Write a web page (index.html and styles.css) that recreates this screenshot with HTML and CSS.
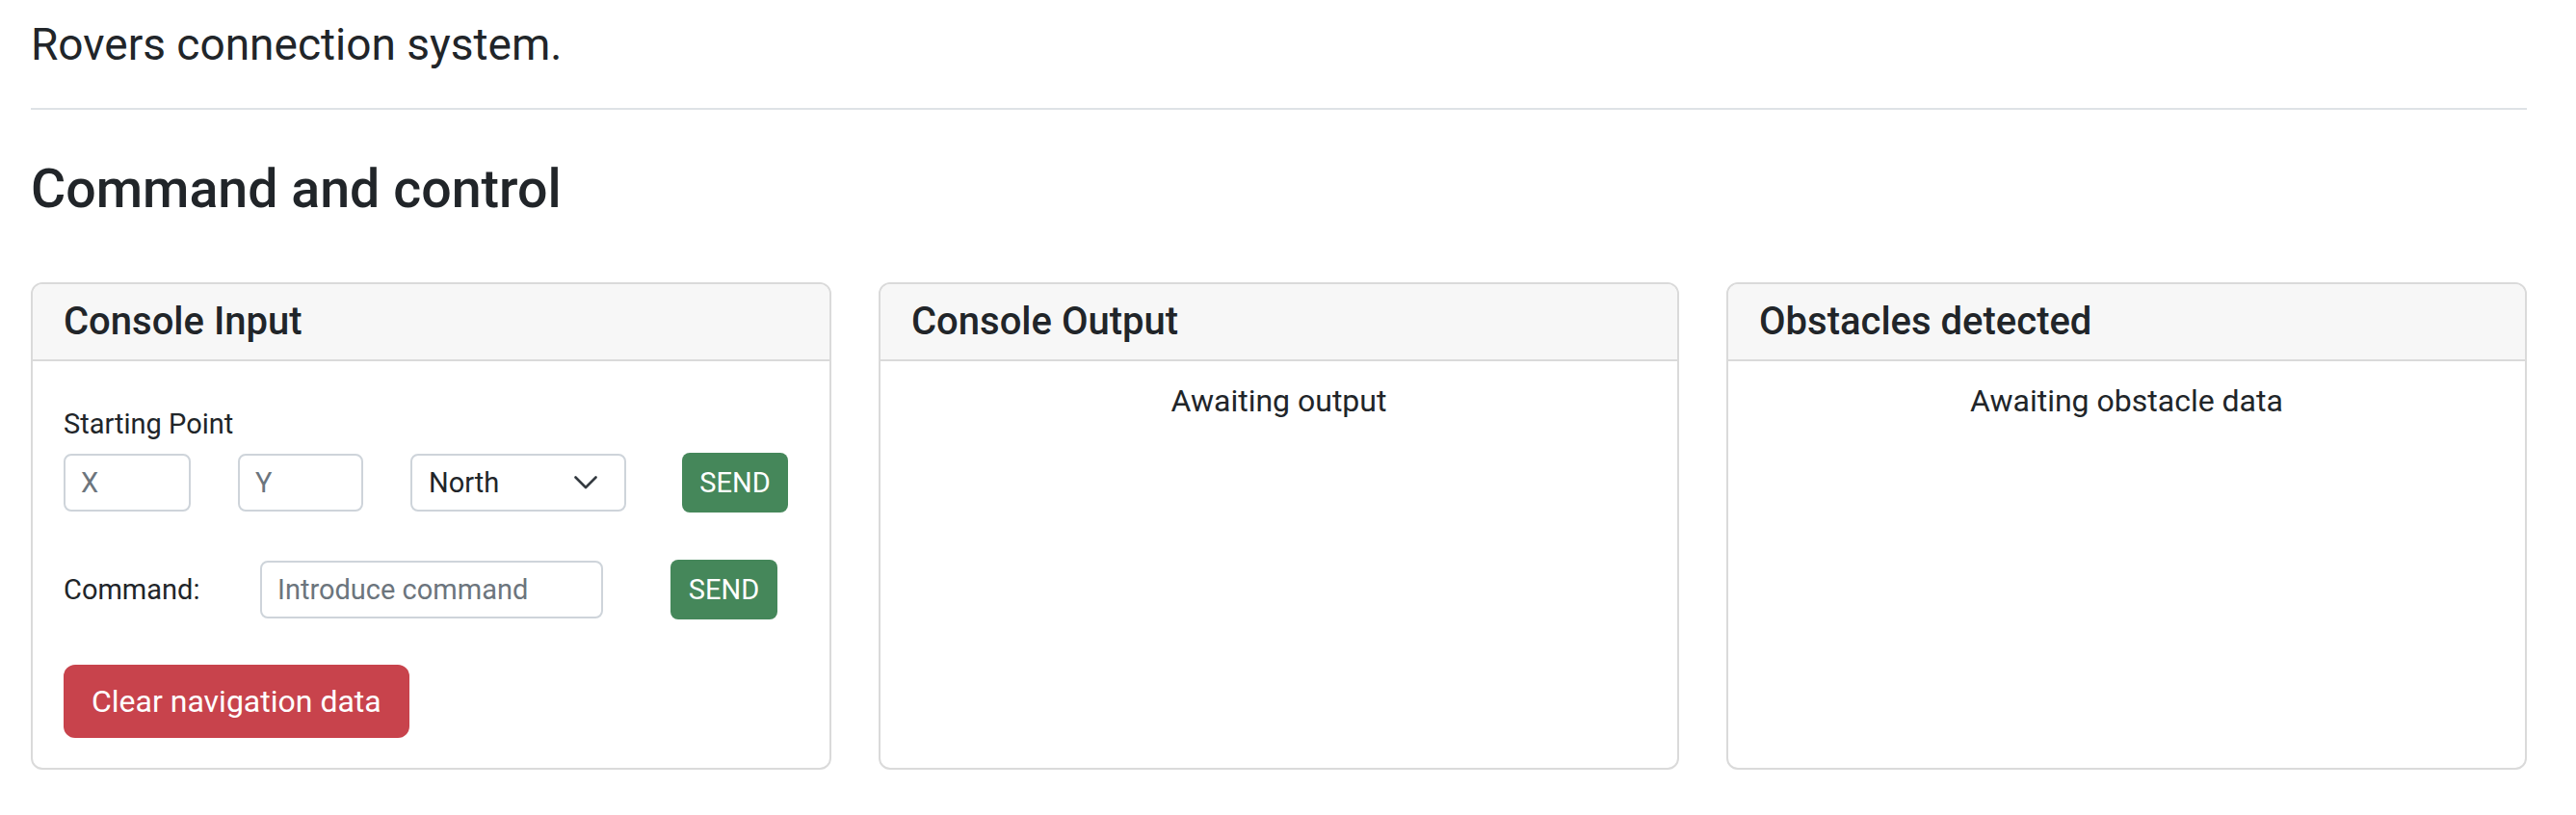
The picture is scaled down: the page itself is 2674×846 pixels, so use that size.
FILE: index.html
```html
<!DOCTYPE html>
<html lang="en">
<head>
<meta charset="utf-8">
<title>Rovers connection system</title>
<link rel="stylesheet" href="styles.css">
</head>
<body>
<div class="page">
  <p class="lead">Rovers connection system.</p>
  <hr class="divider">
  <h2 class="title">Command and control</h2>
  <div class="cards">
    <section class="card">
      <header class="card-header"><h5 class="card-title">Console Input</h5></header>
      <div class="card-body input-body">
        <label class="form-label">Starting Point</label>
        <div class="start-row">
          <input class="field field-x" type="text" placeholder="X">
          <input class="field field-y" type="text" placeholder="Y">
          <div class="select">
            <span>North</span>
            <svg class="chevron" viewBox="0 0 24 14" width="24" height="14" aria-hidden="true"><path d="M1.5 1.5L12 12L22.5 1.5" fill="none" stroke="#343a40" stroke-width="2.6" stroke-linecap="round" stroke-linejoin="round"/></svg>
          </div>
          <button class="btn-send" type="button">SEND</button>
        </div>
        <div class="command-row">
          <label class="cmd-label">Command:</label>
          <input class="field field-cmd" type="text" placeholder="Introduce command">
          <button class="btn-send" type="button">SEND</button>
        </div>
        <button class="btn-clear" type="button">Clear navigation data</button>
      </div>
    </section>
    <section class="card">
      <header class="card-header"><h5 class="card-title">Console Output</h5></header>
      <div class="card-body text-body">
        <p class="awaiting">Awaiting output</p>
      </div>
    </section>
    <section class="card">
      <header class="card-header"><h5 class="card-title">Obstacles detected</h5></header>
      <div class="card-body text-body">
        <p class="awaiting">Awaiting obstacle data</p>
      </div>
    </section>
  </div>
</div>
</body>
</html>
```

FILE: styles.css
```css
* { box-sizing: border-box; }

html, body {
  margin: 0;
  padding: 0;
  background: #ffffff;
}

body {
  font-family: Roboto, "Liberation Sans", Arial, sans-serif;
  color: #212529;
}

.page {
  padding: 0 51px 0 32px;
  display: flex;
  flex-direction: column;
}

.lead {
  margin: 0;
  padding-top: 18px;
  font-size: 46px;
  line-height: 56px;
  font-weight: 400;
}

.divider {
  margin: 38px 0 0 0;
  border: 0;
  height: 2px;
  background: #dee2e6;
}

.title {
  margin: 49px 0 0 0;
  font-size: 55.5px;
  line-height: 67px;
  font-weight: 500;
}

.cards {
  margin-top: 63px;
  display: grid;
  grid-template-columns: repeat(3, 1fr);
  column-gap: 49px;
}

.card {
  border: 2px solid #dadada;
  border-radius: 12px;
  background: #fff;
  display: flex;
  flex-direction: column;
  overflow: hidden;
}

.card-header {
  background: #f7f7f7;
  border-bottom: 2px solid #dadada;
  padding: 15px 32px;
}

.card-title {
  margin: 0;
  font-size: 40px;
  line-height: 48px;
  font-weight: 500;
}

.card-body {
  flex: 1;
  padding: 44px 32px 31px 32px;
  display: flex;
  flex-direction: column;
  align-items: flex-start;
}

.text-body {
  padding-top: 17px;
  align-items: stretch;
}

.awaiting {
  margin: 0;
  text-align: center;
  font-size: 32px;
  line-height: 48px;
}

.form-label {
  font-size: 29px;
  line-height: 42px;
  margin-bottom: 9px;
}

.start-row {
  display: flex;
  align-items: center;
  height: 62px;
}

.field {
  font-family: Roboto, "Liberation Sans", Arial, sans-serif;
  font-size: 29px;
  height: 60px;
  padding: 0 16px;
  border: 2px solid #ced4da;
  border-radius: 8px;
  color: #212529;
  background: #fff;
  outline: none;
}

.field::placeholder {
  color: #6c757d;
  opacity: 1;
}

.field-x { width: 132px; }
.field-y { width: 130px; margin-left: 49px; }

.select {
  width: 224px;
  height: 60px;
  margin-left: 49px;
  border: 2px solid #ced4da;
  border-radius: 8px;
  padding: 0 28px 0 17px;
  display: flex;
  align-items: center;
  justify-content: space-between;
  font-size: 29px;
}

.chevron {
  display: block;
  flex: none;
}

.btn-send {
  font-family: Roboto, "Liberation Sans", Arial, sans-serif;
  height: 62px;
  width: 110px;
  padding: 0;
  border: 0;
  border-radius: 8px;
  background: #45875a;
  color: #fff;
  font-size: 29px;
  margin-left: 58px;
}

.command-row {
  margin-top: 49px;
  display: flex;
  align-items: center;
  height: 62px;
}

.cmd-label {
  width: 204px;
  font-size: 29px;
  line-height: 42px;
}

.field-cmd { width: 356px; }

.command-row .btn-send {
  width: 111px;
  margin-left: 70px;
}

.btn-clear {
  margin-top: 47px;
  font-family: Roboto, "Liberation Sans", Arial, sans-serif;
  height: 76px;
  padding: 0 29px;
  border: 0;
  border-radius: 12px;
  background: #c8434c;
  color: #fff;
  font-size: 32px;
}
```
